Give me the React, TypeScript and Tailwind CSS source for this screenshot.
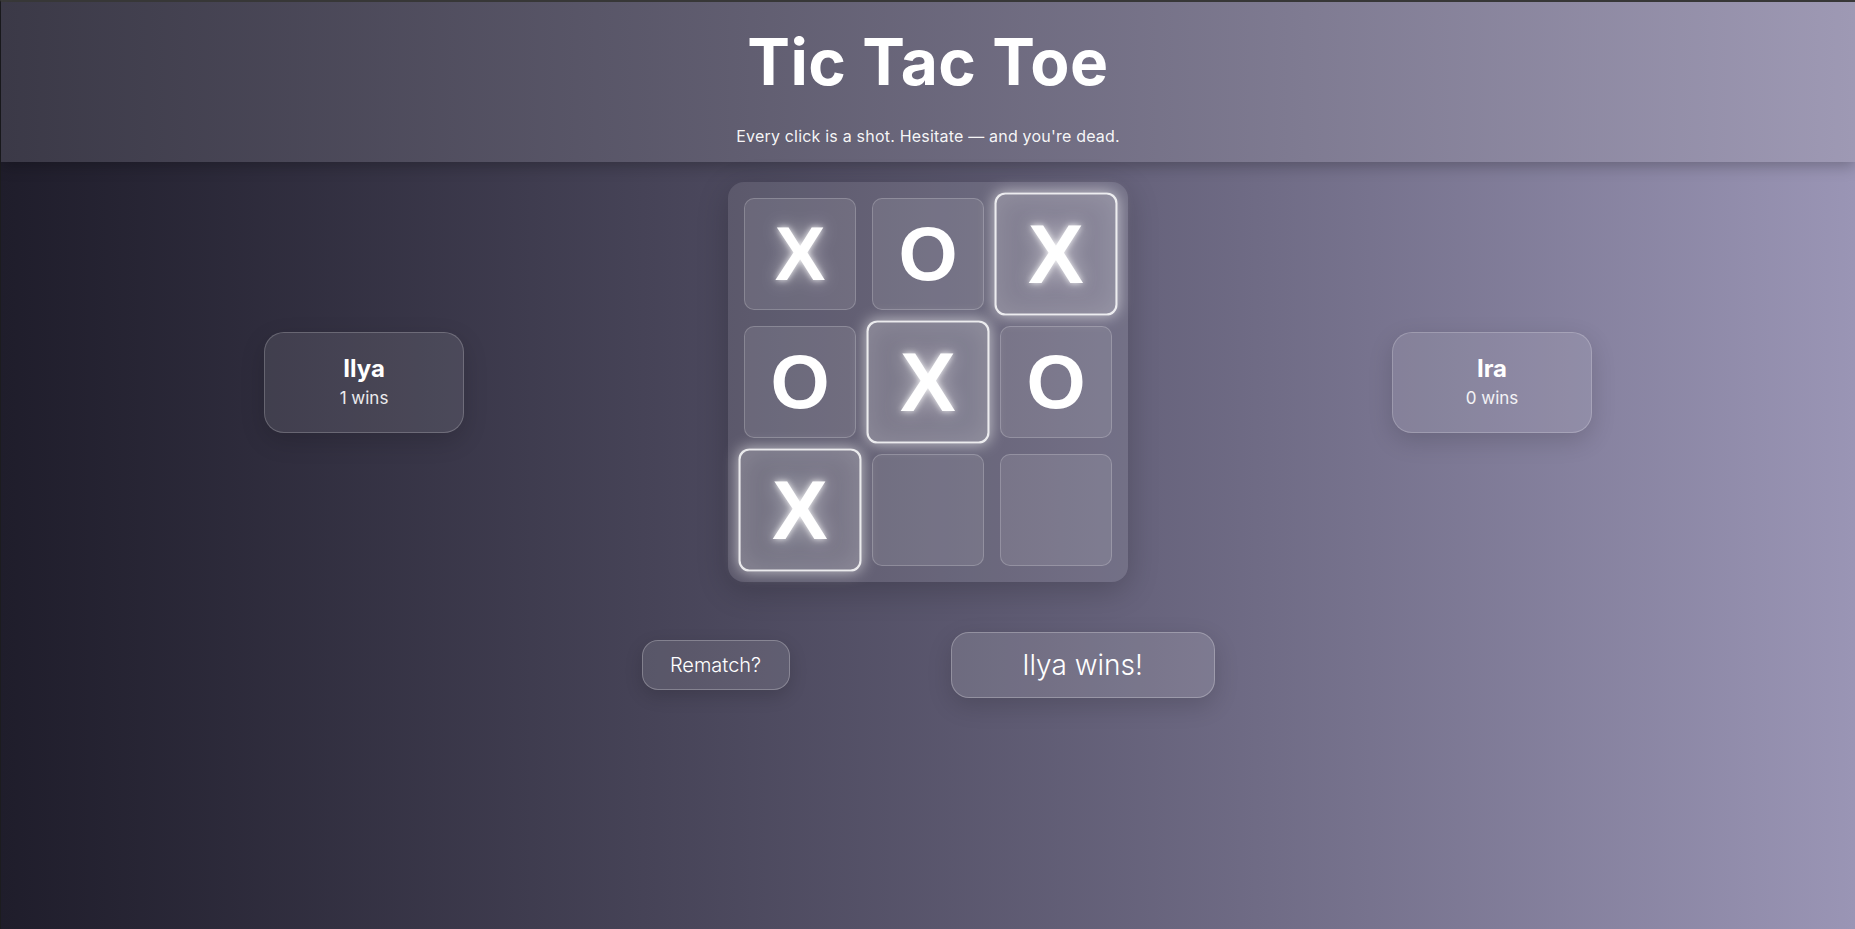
import React from "react";

type Mark = "X" | "O" | "";

const board: Mark[] = ["X", "O", "X", "O", "X", "O", "X", "", ""];
const winning = [2, 4, 6];

function Cell({ mark, win }: { mark: Mark; win: boolean }) {
  return (
    <div
      className={
        win
          ? "w-[112px] h-[112px] rounded-[10px] flex items-center justify-center scale-110 bg-white/[0.16] border-2 border-white/85 shadow-[0_0_14px_rgba(255,255,255,0.6),inset_0_0_24px_rgba(255,255,255,0.14)]"
          : "w-[112px] h-[112px] rounded-[10px] flex items-center justify-center bg-white/[0.09] border border-white/20"
      }
    >
      {mark === "X" && (
        <span className="font-['Liberation_Sans',Arial,sans-serif] font-bold text-[76px] leading-none text-white [text-shadow:0_0_6px_rgba(255,255,255,0.9),0_0_18px_rgba(255,255,255,0.55)]">
          X
        </span>
      )}
      {mark === "O" && (
        <span className="font-['Liberation_Sans',Arial,sans-serif] font-bold text-[76px] leading-none text-white">
          O
        </span>
      )}
    </div>
  );
}

function PlayerCard({ name, wins }: { name: string; wins: number }) {
  return (
    <div className="w-[200px] h-[101px] rounded-[20px] bg-white/[0.09] border border-white/20 shadow-[0_8px_24px_rgba(0,0,0,0.15)] flex flex-col items-center justify-center text-white">
      <div className="text-[24px] font-bold leading-[32px]">{name}</div>
      <div className="text-[17px] leading-[26px] text-white/90">{wins} wins</div>
    </div>
  );
}

export default function App() {
  return (
    <div className="min-h-screen w-full bg-gradient-to-r from-[#1f1d2b] to-[#9a95b5] border-t-2 border-t-[#3b3b3b] border-l border-l-[#1c1c1f] font-['Inter',sans-serif] text-white">
      <header className="h-[160px] bg-gradient-to-r from-[#3b3947] to-[#9e99b4] shadow-[0_4px_14px_rgba(0,0,0,0.25)] flex flex-col items-center">
        <h1 className="mt-[28px] text-[64px] font-bold leading-none tracking-[0.5px]">Tic Tac Toe</h1>
        <p className="mt-[34px] text-[16px] leading-none tracking-[0.2px] text-white/95">
          Every click is a shot. Hesitate — and you're dead.
        </p>
      </header>

      <main className="flex flex-col items-center">
        <div className="mt-[20px] flex items-center justify-center gap-[264px]">
          <PlayerCard name="Ilya" wins={1} />
          <div className="w-[400px] h-[400px] rounded-[16px] bg-white/[0.09] shadow-[0_8px_32px_rgba(0,0,0,0.2)] p-4 grid grid-cols-3 gap-4">
            {board.map((m, i) => (
              <Cell key={i} mark={m} win={winning.includes(i)} />
            ))}
          </div>
          <PlayerCard name="Ira" wins={0} />
        </div>

        <div className="mt-[50px] flex items-center justify-center gap-[161px]">
          <button className="w-[148px] h-[50px] rounded-[16px] bg-white/[0.1] border border-white/25 shadow-[0_6px_18px_rgba(0,0,0,0.15)] text-[20px] font-light text-white">
            Rematch?
          </button>
          <div className="w-[264px] h-[66px] rounded-[18px] bg-white/[0.12] border border-white/25 shadow-[0_8px_24px_rgba(0,0,0,0.15)] flex items-center justify-center text-[28px] font-light text-white">
            Ilya wins!
          </div>
        </div>
      </main>
    </div>
  );
}
